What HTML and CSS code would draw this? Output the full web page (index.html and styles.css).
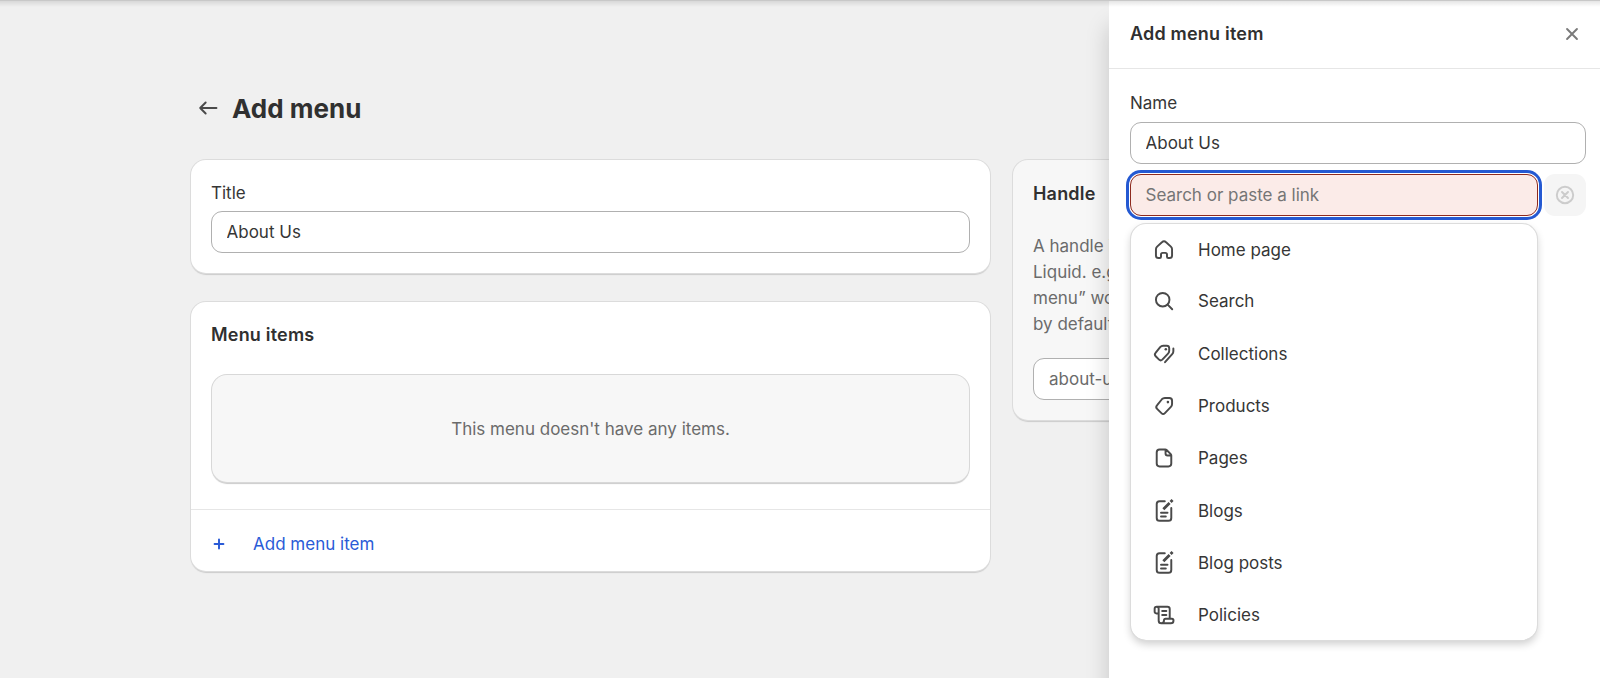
FILE: index.html
```html
<!doctype html>
<html lang="en">
<head>
  <meta charset="UTF-8">
  <meta name="viewport" content="width=device-width, initial-scale=1.0">
  <title>Add menu</title>
  <link rel="stylesheet" href="styles.css">
</head>
<body>

<div class="app">
  <main class="page">
    <header class="page-header">
      <svg class="icon back" viewBox="0 0 20 20"><path d="M16.500 10H4M8.200 5.800 4 10l4.200 4.200"/></svg>
      <h1>Add menu</h1>
    </header>

    <div class="layout">
      <div class="primary">
        <section class="card title-card">
          <label for="menuTitle">Title</label>
          <input type="text" id="menuTitle" class="field" value="About Us">
        </section>

        <section class="card items-card">
          <h2>Menu items</h2>
          <div class="empty">This menu doesn't have any items.</div>
          <button class="add-item">
            <svg class="icon plus" viewBox="0 0 20 20"><path d="M10 6.600v6.800M6.600 10h6.800"/></svg>
            Add menu item
          </button>
        </section>
      </div>

      <aside class="card handle-card">
        <h2>Handle</h2>
        <p>A handle is used to reference a menu in<br>Liquid. e.g. a menu with the title “Sidebar<br>menu” would have the handle “sidebar-menu”<br>by default.</p>
        <input type="text" class="field" value="about-us">
      </aside>
    </div>
  </main>

  <aside class="sheet">
    <header class="sheet-header">
      <h2>Add menu item</h2>
      <svg class="icon close" viewBox="0 0 20 20"><path d="m6.200 6.200 7.600 7.600M13.800 6.200l-7.600 7.600"/></svg>
    </header>

    <div class="sheet-body">
      <label for="itemName">Name</label>
      <input type="text" id="itemName" class="field" value="About Us">

      <div class="link-row">
        <input type="text" class="field error" placeholder="Search or paste a link">
        <button class="clear" disabled>
          <svg class="icon" viewBox="0 0 20 20"><circle cx="10" cy="10" r="6.300"/><path d="m7.700 7.700 4.600 4.600M12.300 7.700l-4.600 4.600"/></svg>
        </button>
      </div>

      <ul class="options">
        <li>
          <svg class="icon" viewBox="0 0 20 20"><path d="M3.800 9.500c0-.8.300-1.500.9-2.100l3.700-3.400a2.300 2.300 0 0 1 3.200 0l3.700 3.400c.6.600.9 1.300.9 2.100v4.700c0 1.200-.8 2-2 2h-.9c-.6 0-1-.4-1-1v-1.700c0-.8-.6-1.300-1.300-1.300h-2c-.7 0-1.300.5-1.300 1.300v1.700c0 .6-.4 1-1 1h-.9c-1.200 0-2-.8-2-2z"/></svg>
          Home page
        </li>
        <li>
          <svg class="icon" viewBox="0 0 20 20"><circle cx="9" cy="9" r="5.200"/><path d="m12.800 12.800 3.500 3.500"/></svg>
          Search
        </li>
        <li>
          <svg class="icon" viewBox="0 0 20 20"><path d="M9.300 3.600h2.800c1.100 0 1.900.8 1.900 1.900v2c0 .8-.3 1.600-.9 2.200l-4.400 4.600c-.7.700-1.800.7-2.500 0l-2.600-2.600c-.7-.7-.8-1.700-.1-2.500l3.700-4.600c.5-.7 1.200-1 2.100-1z"/><path d="M17.200 5.700v2.200c0 .8-.3 1.600-.9 2.200l-5.500 6.200"/><circle class="dot" cx="11.400" cy="6.400" r="1"/></svg>
          Collections
        </li>
        <li>
          <svg class="icon" viewBox="0 0 20 20"><path d="M10.700 3.800h3.400c1.200 0 2.100.9 2.100 2.100v2.500c0 .9-.3 1.700-.9 2.300l-4.600 4.800c-.8.800-1.900.8-2.700 0l-3.300-3.300c-.8-.8-.8-1.900-.1-2.700l3.800-4.700c.6-.7 1.400-1 2.300-1z"/><circle class="dot" cx="13" cy="7" r="1"/></svg>
          Products
        </li>
        <li>
          <svg class="icon" viewBox="0 0 20 20"><path d="M11 3.500H6.600c-1.400 0-2.200.9-2.200 2.200v8.600c0 1.300.9 2.200 2.200 2.200h6.800c1.300 0 2.200-.9 2.200-2.200V8c0-.4-.1-.7-.4-1L12 3.900c-.3-.3-.6-.4-1-.4zM11.200 3.700v2.800c0 .9.600 1.500 1.500 1.500h2.700"/></svg>
          Pages
        </li>
        <li>
          <svg class="icon" viewBox="0 0 20 20"><path d="M10.600 2.500H6.600c-1.300 0-2.200.9-2.200 2.200v10.600c0 1.300.9 2.200 2.200 2.200h6.800c1.300 0 2.200-.9 2.200-2.200V7.700M7.700 11.300h5M7.700 14.300h3.700"/><path class="pencil" d="m9.500 8.600 4.800-4.800M15.100 3l1.500-1.500"/></svg>
          Blogs
        </li>
        <li>
          <svg class="icon" viewBox="0 0 20 20"><path d="M10.600 2.500H6.600c-1.300 0-2.200.9-2.200 2.200v10.600c0 1.300.9 2.200 2.200 2.200h6.800c1.300 0 2.200-.9 2.200-2.200V7.700M7.700 11.300h5M7.700 14.300h3.700"/><path class="pencil" d="m9.500 8.600 4.800-4.800M15.100 3l1.500-1.500"/></svg>
          Blog posts
        </li>
        <li>
          <svg class="icon" viewBox="0 0 20 20"><path d="M5.900 8.800H4.200c-.9 0-1.400-.5-1.400-1.400V5.200c0-.9.700-1.600 1.600-1.600h8.200c1 0 1.800.8 1.800 1.800v7.400M4.400 3.600c.9 0 1.500.7 1.500 1.600v9c0 1.300.8 2.200 2.100 2.200h7.200c1.300 0 2.100-.9 2.100-2.200 0-.8-.4-1.300-1.200-1.300h-4.900c-.7 0-1.200.5-1.200 1.200 0 1.400-.7 2.300-2 2.300M8.600 6.900h3.200M8.600 10h3.200"/></svg>
          Policies
        </li>
      </ul>
    </div>
  </aside>
</div>

</body>
</html>
```

FILE: styles.css
```css
* {
  box-sizing: border-box;
}

body {
  margin: 0;
  font-family: Inter, sans-serif;
  font-size: 17px;
  line-height: 26px;
  color: #363636;
  background-color: #f0f0f0;
}

h1, h2, p, ul {
  margin: 0;
  padding: 0;
}

h1, h2 {
  color: #303030;
}

h2 {
  font-size: 18px;
  font-weight: 600;
  line-height: 26px;
  letter-spacing: 0.2px;
}

button {
  font: inherit;
  border: none;
  background: none;
  padding: 0;
}

label {
  display: block;
}

.app {
  display: flex;
  height: 678px;
  overflow: hidden;
  position: relative;
}

/* shadow of the top bar */
.app::before {
  content: "";
  position: absolute;
  top: 0;
  left: 0;
  right: 0;
  height: 7px;
  background: linear-gradient(#c8c8c8 1px, rgba(0, 0, 0, 0.1) 1px, rgba(0, 0, 0, 0));
  z-index: 2;
}

.icon {
  width: 26px;
  height: 26px;
  flex: none;
  fill: none;
  stroke: #4a4a4a;
  stroke-width: 1.5;
  stroke-linecap: round;
  stroke-linejoin: round;
}

.icon .dot {
  fill: #4a4a4a;
  stroke: none;
}

.icon .pencil {
  stroke-width: 2.2;
  stroke-linecap: butt;
}

.page {
  width: 1109px;
  flex: none;
  overflow: hidden;
  padding: 93px 0 0 191px;
}

.page-header {
  display: flex;
  align-items: center;
  gap: 11px;
  height: 32px;
  padding-left: 4px;
  margin-bottom: 35px;
}

.page-header h1 {
  font-size: 26px;
  font-weight: 700;
  line-height: 32px;
}

.back {
  margin-top: -3px;
}

.layout {
  display: flex;
  align-items: flex-start;
  gap: 23px;
}

.primary {
  width: 799px;
  flex: none;
  display: flex;
  flex-direction: column;
  gap: 29px;
}

.card {
  background-color: #fff;
  border-radius: 15px;
  padding: 20px;
  box-shadow: 0 0 0 1px #dcdcdc, 0 2px 1px #cbcbcb;
}

.title-card {
  height: 113px;
}

.field {
  display: block;
  width: 100%;
  height: 42px;
  border: 1px solid #b0b0b0;
  border-radius: 11px;
  padding: 0 14.5px;
  font: inherit;
  color: #363636;
  background-color: #fff;
  outline: none;
}

.title-card .field {
  margin-top: 5px;
}

.items-card {
  height: 269px;
}

.empty {
  display: flex;
  align-items: center;
  justify-content: center;
  height: 107px;
  margin: 27px 1px 0;
  border-radius: 15px;
  color: #6b6b6b;
  background-color: #f7f7f7;
  box-shadow: 0 0 0 1px #d8d8d8, 0 2px 1px #cbcbcb;
}

.add-item {
  display: flex;
  align-items: center;
  gap: 21px;
  width: 799px;
  height: 63px;
  margin: 27px -20px 0;
  padding: 6px 15px 0;
  border-top: 1px solid #e6e6e6;
  color: #2a5bd7;
}

.plus {
  stroke: #2a5bd7;
}

.handle-card {
  width: 388px;
  height: 260px;
  flex: none;
  background-color: #f7f7f7;
}

.handle-card h2 {
  padding-top: 1px;
}

.handle-card p {
  margin-top: 25.5px;
  line-height: 26.2px;
  white-space: nowrap;
  color: #6b6b6b;
}

.handle-card .field {
  margin-top: 21px;
  padding-left: 15px;
  color: #6b6b6b;
}

.sheet {
  flex: 1;
  background-color: #fff;
  box-shadow: 0 26px 22px rgba(0, 0, 0, 0.18);
  z-index: 1;
}

.sheet-header {
  display: flex;
  align-items: center;
  justify-content: space-between;
  height: 69px;
  padding: 0 15px 0 21px;
  border-bottom: 1px solid #e6e6e6;
}

.close {
  stroke: #7a7a7a;
}

.sheet-body {
  padding: 21px 14px 0 21px;
}

.sheet-body label {
  margin-bottom: 6px;
}

.link-row {
  display: flex;
  gap: 6px;
  margin-top: 10px;
}

.field.error {
  width: 408px;
  border-color: #8e2a1e;
  background-color: #fbebe8;
  box-shadow: 0 0 0 1px #fff, 0 0 0 4px #2459d2;
}

.field::placeholder {
  color: #757575;
  opacity: 1;
}

.clear {
  display: flex;
  align-items: center;
  justify-content: center;
  width: 42px;
  height: 42px;
  border-radius: 11px;
  background-color: #f5f5f5;
}

.clear .icon {
  stroke: #cccccc;
}

.options {
  list-style: none;
  width: 406px;
  height: 416px;
  margin: 8px 0 0 1px;
  overflow: hidden;
  border-radius: 15px;
  box-shadow: 0 0 0 1px #dcdcdc, 0 4px 8px rgba(0, 0, 0, 0.2);
}

.options li {
  display: flex;
  align-items: center;
  gap: 21px;
  height: 52.35px;
  padding-left: 20px;
}

.options li:first-child {
  height: 51px;
}
```
